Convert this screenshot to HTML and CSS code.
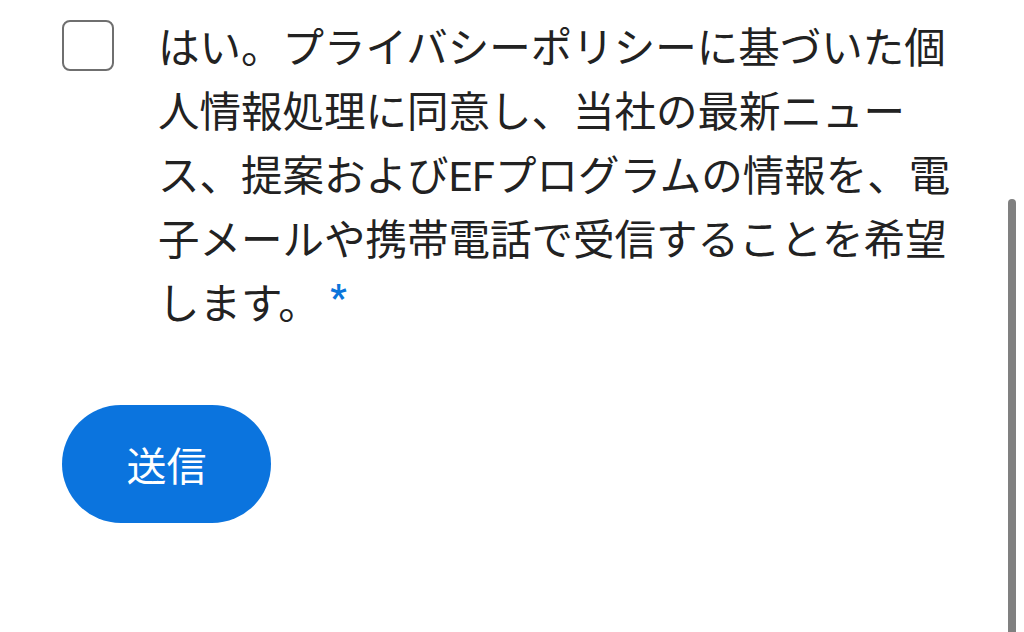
FILE: index.html
```html
<!DOCTYPE html>
<html lang="ja">
<head>
  <meta charset="UTF-8">
  <meta name="viewport" content="width=device-width, initial-scale=1.0">
  <title>同意フォーム</title>
  <link rel="stylesheet" href="styles.css">
</head>
<body>
  <form class="consent-form">
    <div class="consent-row">
      <input type="checkbox" id="consent" class="consent-box">
      <label for="consent" class="consent-label">はい。プライバシーポリシーに基づいた個人情報処理に同意し、当社の最新ニュース、提案およびEFプログラムの情報を、電子メールや携帯電話で受信することを希望します。 <span class="required">*</span></label>
    </div>

    <button type="button" class="submit-btn">送信</button>
  </form>

  <div class="scrollbar"></div>
</body>
</html>
```

FILE: styles.css
```css
body {
  margin: 0;
  background-color: #ffffff;
  color: #222222;
  font-family: Roboto, "Noto Sans CJK JP", sans-serif;
  height: 632px;
  overflow: hidden;
}

.consent-form {
  padding-left: 62px;
}

.consent-row {
  display: flex;
  align-items: flex-start;
  gap: 44px;
}

.consent-box {
  appearance: none;
  -webkit-appearance: none;
  margin: 20px 0 0 0;
  width: 52px;
  height: 51px;
  border: 2px solid #6f6f6f;
  border-radius: 8px;
  background: #fff;
  box-sizing: border-box;
  flex-shrink: 0;
}

.consent-label {
  width: 800px;
  padding-top: 17px;
  font-size: 41.5px;
  line-height: 64px;
  line-break: strict;
}

.required {
  color: #0a74da;
  font-size: 36px;
  font-weight: 700;
  line-height: 1;
  vertical-align: 9px;
}

.submit-btn {
  margin-top: 68px;
  width: 209px;
  height: 118px;
  border: none;
  border-radius: 59px;
  background-color: #0b74de;
  color: #ffffff;
  font-family: Roboto, "Noto Sans CJK JP", sans-serif;
  font-size: 40px;
  padding: 0;
}

.scrollbar {
  position: absolute;
  right: 8px;
  top: 199px;
  width: 8px;
  height: 440px;
  background-color: #808080;
  border-radius: 4px;
}
```
